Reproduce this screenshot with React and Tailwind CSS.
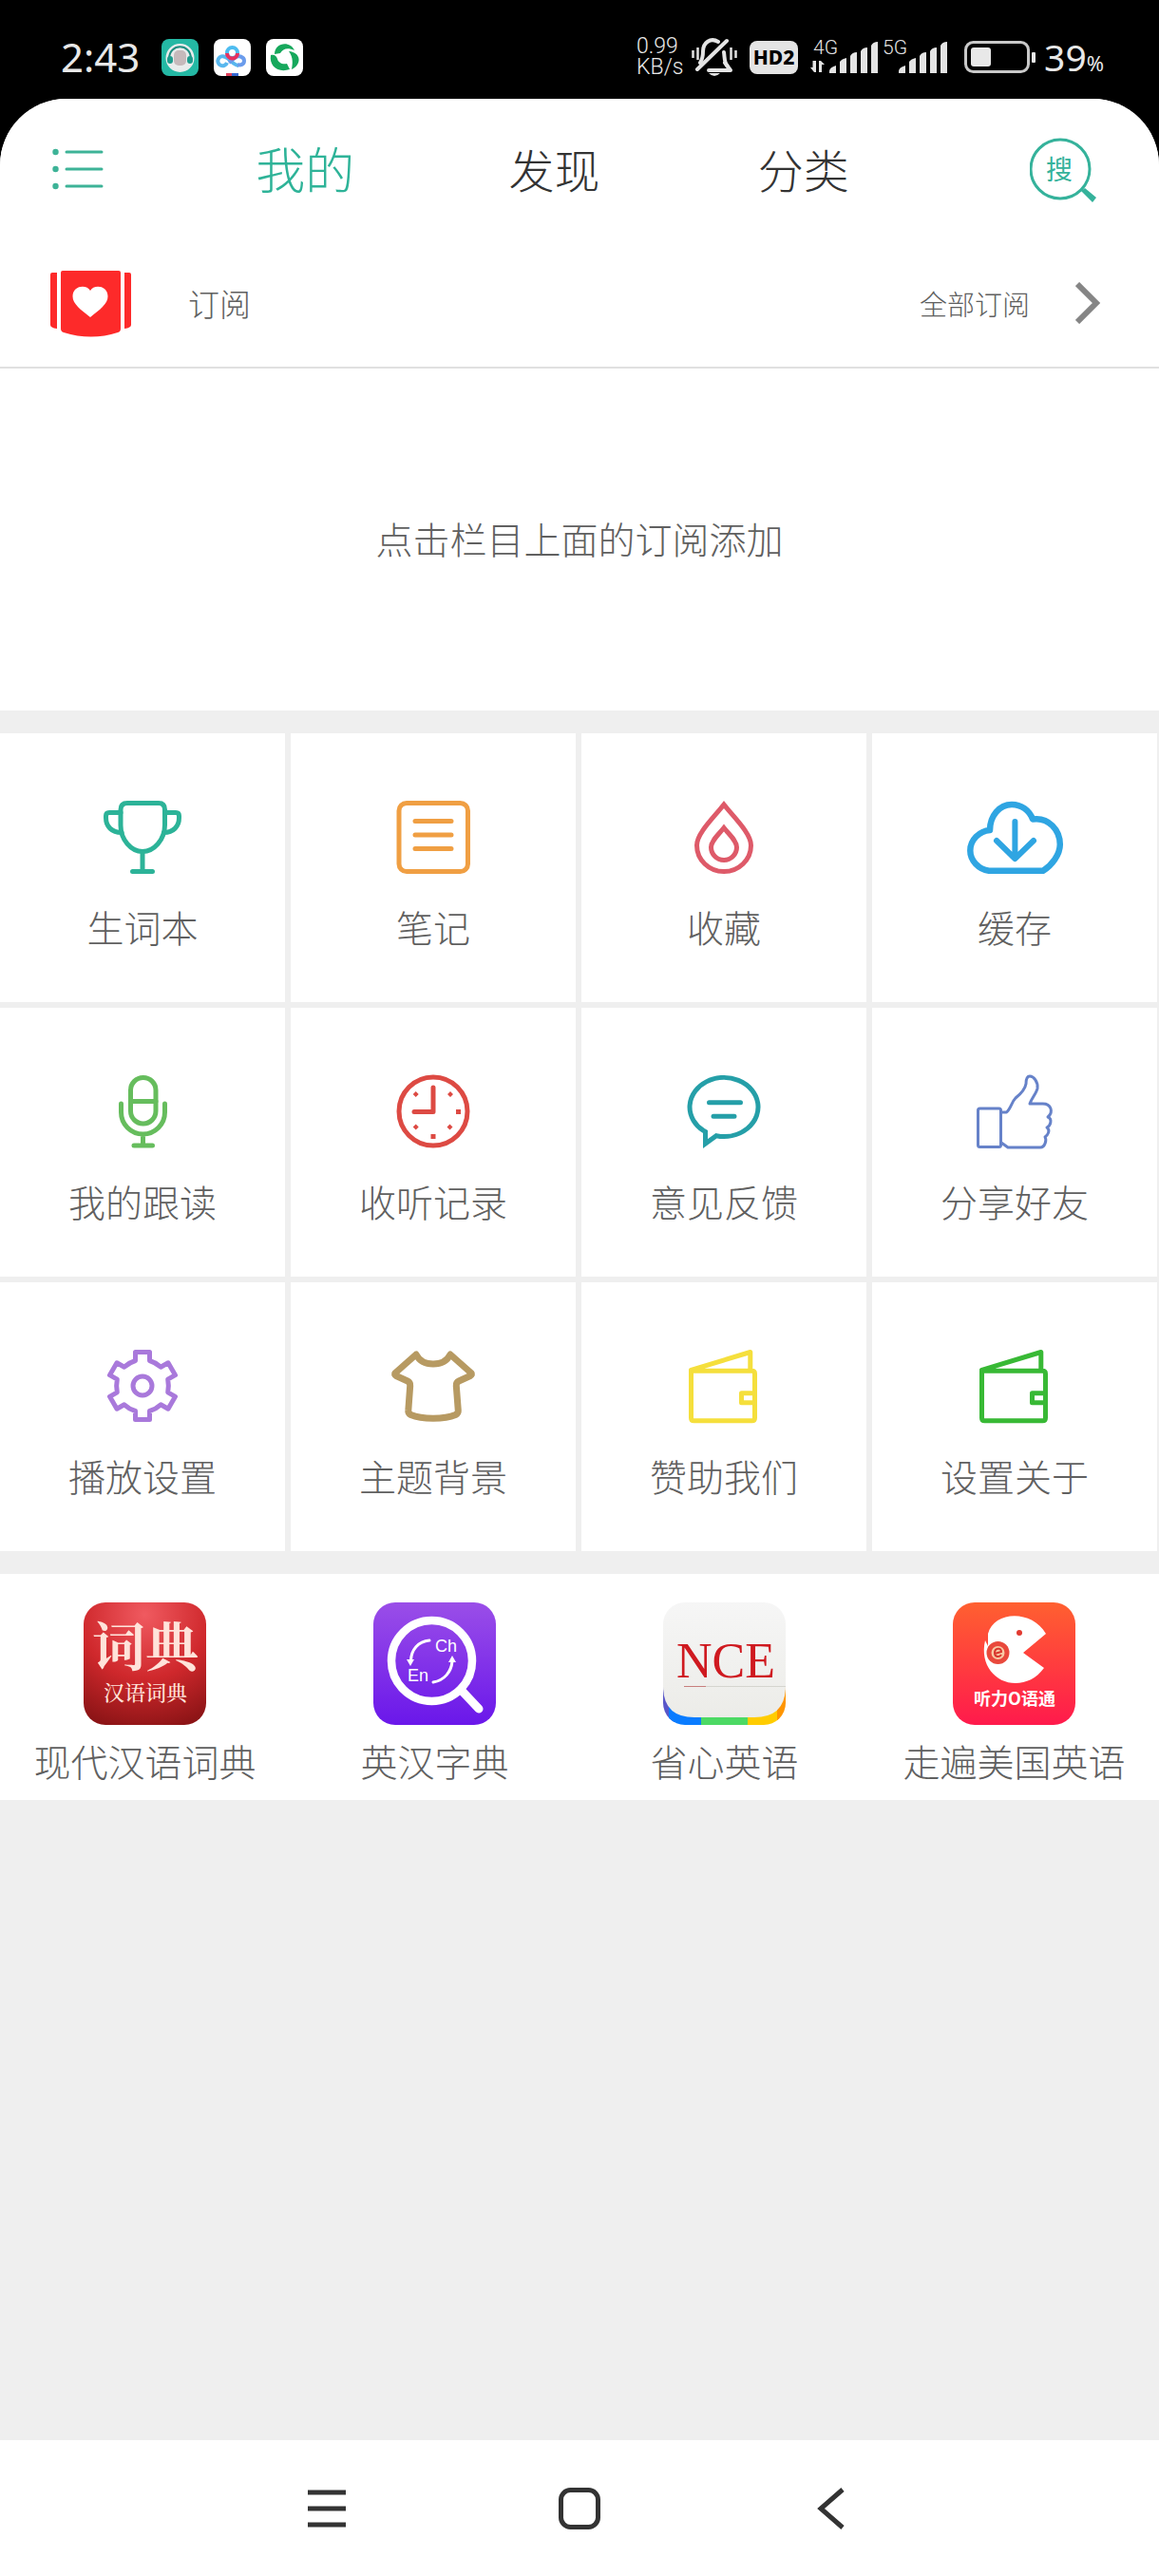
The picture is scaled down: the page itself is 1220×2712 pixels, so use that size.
import { useState } from "react";

// status bar icons
function BellOff() {
  return (
    <svg className="w-12 h-10" viewBox="0 0 48 40" fill="none" stroke="#e4e4e4">
      <path d="M38 30c-4-4-3-9-4-15M28 4C20-1 12 5 12 14c0 6-1 9-3 12" strokeWidth="4" strokeLinecap="round" />
      <path d="M18 34h23l-6-8" strokeWidth="4" strokeLinejoin="round" strokeLinecap="round" />
      <path d="M37 3L6 33" strokeWidth="4" strokeLinecap="round" />
      <path d="M18 37h12q-6 6-12 0z" fill="#e4e4e4" stroke="none" />
      <path d="M1.500 13v8M6.500 10v13M41.500 10v13M46.500 13v8" strokeWidth="2.500" />
    </svg>
  );
}

function Signal({ label, arrows }) {
  return (
    <svg className="w-[73px] h-12 shrink-0" viewBox="0 -4 73 48" fill="#e4e4e4">
      <text x="4" y="17" fontSize="21" className="font-light" fontFamily="Roboto, sans-serif">
        {label}
      </text>
      {arrows && (
        <path d="M3.500 24v7H1l4 5h2V24zM12 36v-7h-2v7zM10 24v12h3v-8h3l-4-4z" />
      )}
      <path d="M21 37v-2q0-4 7-6v8zM32 37V25q2-3 7-4v16zM43 37V19q2-4 7-4v22zM54 37V14q2-4 7-4v27zM65 37V8q2-4 7-4v33z" />
    </svg>
  );
}

function StatusBar() {
  return (
    <div className="flex items-center justify-between h-[104px] pt-4 pl-[64px] pr-[58px] text-[#e8e8e8]">
      <div className="flex items-center gap-4">
        <span className="text-[42px] leading-10 w-[90px]">2:43</span>
        <svg className="w-[39px] h-[39px]" viewBox="0 0 39 39">
          <rect width="39" height="39" rx="8" fill="#24b8a4" />
          <circle cx="19.500" cy="20" r="15" fill="#e9ecec" />
          <rect x="13" y="12" width="13" height="16" rx="5" fill="#c6b9bb" />
          <path d="M8 21C8 4 31 4 31 21" fill="none" stroke="#1d8d80" strokeWidth="2" />
          <rect x="6" y="18" width="6" height="8" rx="3" fill="#1d9c8d" />
          <rect x="27" y="18" width="6" height="8" rx="3" fill="#1d9c8d" />
        </svg>
        <svg className="w-[39px] h-[39px]" viewBox="0 0 39 39" fill="none" strokeWidth="4">
          <rect width="39" height="39" rx="8" fill="#fff" />
          <path d="M14 25a5 5 0 1 1-2-6c5 2 9 9 14 9" stroke="#58b7ee" />
          <path d="M16 25l6-5c3-3 10-2 10 3 0 4-4 5-7 4" stroke="#6b9cec" />
          <circle cx="19.500" cy="14.500" r="5.500" stroke="#4dbcf0" />
          <path d="M14 15a5.500 5.500 0 0 0 11 0" stroke="#e8315f" />
          <path d="M13 38h6" stroke="#e0405a" />
          <path d="M19 38h7" stroke="#3568d0" />
        </svg>
        <svg className="w-[39px] h-[39px]" viewBox="0 0 39 39" fill="#16a85c">
          <rect width="39" height="39" rx="8" fill="#fff" />
          <path d="M9 16C9 4 25 1 30 12c-7-3-12-2-15 3z" />
          <path d="M24 13c13 1 14 14 3 19 1-6 2-12-3-19z" />
          <path d="M5 17c4-1 6 1 7 4 1 4 5 6 10 5l3 6C13 36 3 29 5 17z" />
        </svg>
      </div>

      <div className="flex items-center">
        <div className="w-[58px] text-[23px] leading-[22px] font-light font-[Roboto,sans-serif]">
          <p>0.99</p>
          <p>KB/s</p>
        </div>
        <BellOff />
        <span className="ml-[13px] w-[51px] h-[35px] rounded-lg bg-[#e4e4e4] text-black text-[21px] leading-[35px] font-extrabold text-center">
          HD2
        </span>
        <div className="flex ml-3">
          <Signal label="4G" arrows />
          <Signal label="5G" />
        </div>
        <svg className="ml-[17px] w-[76px] h-9" viewBox="0 0 76 36">
          <rect x="1.500" y="2.500" width="66" height="31" rx="8" fill="none" stroke="#c9c9c9" strokeWidth="3" />
          <rect x="7" y="8" width="21" height="20" rx="3" fill="#e8e8e8" />
          <rect x="71" y="13" width="4" height="11" rx="1" fill="#e8e8e8" />
        </svg>
        <span className="ml-2 text-[39px] leading-10">39</span>
        <span className="text-[22px] leading-10 pt-3">%</span>
      </div>
    </div>
  );
}

// line icons of the function grid
const icons = {
  trophy: (
    <g stroke="#2cb398" strokeWidth="5">
      <path d="M39 3.500h33q6.500 0 6.500 7v16C78.500 42 67 54.500 55 54.500S32 42 32 27V10.500q0-7 7-7z" />
      <path d="M32 13.500H20q-3.500 0-3.500 3.500v2c0 9 6 15.500 16.500 15.500M78.500 13.500H90q3.500 0 3.500 3.500v2c0 9-6 15.500-16 15.500M55 55v20M44.500 75.500h21" />
    </g>
  ),
  note: (
    <g stroke="#f09f43" strokeWidth="5">
      <rect x="19" y="3.500" width="72.500" height="72" rx="8" />
      <path d="M36 22.500h38M36 37h38M36 51.500h38" />
    </g>
  ),
  drop: (
    <g stroke="#de5a69" strokeWidth="5" strokeLinejoin="miter">
      <path d="M55 5C45 18 26.500 35 26.500 48a28.500 27.500 0 0 0 57 0C83.500 35 65 18 55 5z" />
      <path d="M55 29.500C50 36 41.500 43 41.500 50a13.500 13.500 0 0 0 27 0C68.500 43 60 36 55 29.500z" />
    </g>
  ),
  cloud: (
    <g stroke="#2fa5e2" strokeWidth="6.500">
      <path d="M28 74.800C17 73 8.300 64 8.300 53.500 8.300 42 18 33 29 32 29 17 39 5 52 5c10 0 18.500 6 22 15.500C91 18 102.800 32 102.800 47c0 11-8.800 22-17.800 27.800z" />
      <path d="M55.400 23v38M36 43l19.400 19L75 43" strokeWidth="6" />
    </g>
  ),
  mic: (
    <g stroke="#66bd5d" strokeWidth="5">
      <rect x="42.500" y="3.500" width="26.500" height="48.500" rx="13.200" />
      <path d="M43 28.500h26M32.500 31v9a23 23 0 0 0 46 0v-9M55.500 63v11M46 75h19.500" />
    </g>
  ),
  clock: (
    <g stroke="#dd4a43" strokeWidth="5">
      <circle cx="55" cy="39" r="36" />
      <path d="M55 14v25.500H35" strokeWidth="5" />
      <path
        d="M36.700 18l3 3-3 3-3-3zM73 18l3 3-3 3-3-3zM72.500 52.500l3 3-3 3-3-3zM36.700 52.500l3 3-3 3-3-3zM79 37h5v5h-5zM52.500 63h5v5h-5z"
        fill="#dd4a43"
        stroke="none"
      />
    </g>
  ),
  bubble: (
    <g stroke="#259fa8" strokeWidth="5" strokeLinejoin="miter">
      <path d="M47 64.700A36 31 0 1 0 33.300 59.200L35.500 60.500V73z" />
      <path d="M39.500 29.700h33M44 44.300h22" />
    </g>
  ),
  thumb: (
    <g stroke="#6682c9" strokeWidth="3">
      <rect x="16.500" y="36" width="24" height="40.500" rx="2" />
      <path d="M41 40h5.500C51 36 52 29 56 25c5-4 10-9 11-15 0-5 1-8 4-8 4 0 9 6 8 13-1 5-6 10-8 16h12c11-1 13 9 7 14 5 2 3 9-1 11 4 3 1 8-2 10 2 3 0 11-5 11H48l-7-5" />
    </g>
  ),
  gear: (
    <g stroke="#a979db" strokeWidth="5" transform="translate(55 39)">
      <path d="M-7.500-26.500V-35.500H7.500V-26.500Q14-24.500 19.200-19.800L27-24.200 34.500-11.300 26.700-6.800Q28 0 26.700 6.800L34.500 11.300 27 24.200 19.200 19.800Q14 24.500 7.500 26.500V35.500H-7.500V26.500Q-14 24.500-19.200 19.800L-27 24.200-34.500 11.300-26.700 6.800Q-28 0-26.700-6.800L-34.500-11.300-27-24.200-19.200-19.800Q-14-24.500-7.500-26.500Z" />
      <circle r="10" />
    </g>
  ),
  shirt: (
    <g stroke="#b79a62" strokeWidth="7">
      <path d="M37 6L15 25.500q-1.500 1.500 1 3L28 34q3 1.500 2.700 5L28.800 65q-.3 3 2.700 4.500c11.500 5 35.500 5 47 0q3-1.500 2.800-4.500l-2-26q-.3-3.500 2.700-5l12-5.500q2.500-1.500 1-3L73 6c-3 6-9 10-18 10S40 12 37 6z" />
    </g>
  ),
  wallet: (
    <g strokeWidth="5">
      <path d="M20.500 23.300h64q3 0 3 3v46.500q0 3-3 3h-61q-3 0-3-3zM20.500 22.300L82.800 3.500v19.800M87 46.700H73.500v10H87" />
    </g>
  ),
};

const cells = [
  { label: "生词本", icon: icons.trophy },
  { label: "笔记", icon: icons.note },
  { label: "收藏", icon: icons.drop },
  { label: "缓存", icon: icons.cloud },
  { label: "我的跟读", icon: icons.mic },
  { label: "收听记录", icon: icons.clock },
  { label: "意见反馈", icon: icons.bubble },
  { label: "分享好友", icon: icons.thumb },
  { label: "播放设置", icon: icons.gear },
  { label: "主题背景", icon: icons.shirt },
  { label: "赞助我们", icon: icons.wallet, color: "#f5df3c" },
  { label: "设置关于", icon: icons.wallet, color: "#38b935" },
];

// app logos
function DictLogo() {
  return (
    <>
      <defs>
        <radialGradient id="dict" cx="0.5" cy="0.1" r="0.95">
          <stop offset="0" stopColor="#f05a60" />
          <stop offset="0.55" stopColor="#cf282c" />
          <stop offset="1" stopColor="#8c1416" />
        </radialGradient>
      </defs>
      <rect width="129" height="129" rx="23" fill="url(#dict)" />
      <g fill="#ffe3da" textAnchor="middle" fontFamily="Noto Serif CJK SC, Noto Sans CJK SC, serif">
        <text x="65" y="67" fontSize="56" fontWeight="700">词典</text>
        <text x="65" y="103" fontSize="22" fontWeight="500">汉语词典</text>
      </g>
    </>
  );
}

function ChEnLogo() {
  return (
    <>
      <defs>
        <linearGradient id="chen" x1="0" y1="0" x2="0" y2="1">
          <stop offset="0" stopColor="#9a4ee8" />
          <stop offset="1" stopColor="#6a17ea" />
        </linearGradient>
      </defs>
      <rect width="129" height="129" rx="23" fill="url(#chen)" />
      <g fill="none" stroke="#fff" strokeLinecap="round">
        <circle cx="61.500" cy="61.500" r="42.500" strokeWidth="8.500" />
        <path d="M94 94l17 18" strokeWidth="9" />
        <path d="M59 40C47 41 40 50 39.500 61M63 84c12-2 19-11 20-22" strokeWidth="3" />
      </g>
      <path d="M35 60h8l-4 7zM79 63h8l-4-7z" fill="#fff" />
      <g fill="#fff" fontSize="18" fontWeight="400" fontFamily="Liberation Sans, sans-serif">
        <text x="65" y="52">Ch</text>
        <text x="36" y="83">En</text>
      </g>
    </>
  );
}

function NceLogo() {
  return (
    <>
      <defs>
        <clipPath id="nceClip">
          <rect width="129" height="129" rx="23" />
        </clipPath>
        <linearGradient id="nce" x1="0" y1="0" x2="0" y2="1">
          <stop offset="0" stopColor="#f6f6f6" />
          <stop offset="1" stopColor="#ecece8" />
        </linearGradient>
      </defs>
      <g clipPath="url(#nceClip)">
        <path d="M0 80h12v49H0z" fill="#5856c8" />
        <path d="M6 110h34v19H6z" fill="#0a7cff" />
        <path d="M40 115h49v14H40z" fill="#4cd964" />
        <path d="M89 110h32v19H89z" fill="#ffcc00" />
        <path d="M120 80h9v49h-9z" fill="#ff9500" />
        <path d="M0 0h129v88q0 33-33 33H33Q0 121 0 88z" fill="url(#nce)" />
      </g>
      <path d="M22 88.500h107" stroke="#d5d5cf" />
      <path d="M22 88.500h23" stroke="#c77f7d" />
      <text x="66" y="79" fontSize="52" textAnchor="middle" fill="#cf1a20" fontFamily="Liberation Serif, serif">
        NCE
      </text>
    </>
  );
}

function OralLogo() {
  return (
    <>
      <defs>
        <linearGradient id="oral" x1="0" y1="0" x2="0" y2="1">
          <stop offset="0" stopColor="#ff6030" />
          <stop offset="1" stopColor="#ff1a4c" />
        </linearGradient>
      </defs>
      <rect width="129" height="129" rx="23" fill="url(#oral)" />
      <path d="M98 33L74 53l22 16C88 80 77 85 66 85 45 85 28 66 34 40l3 6V33C43 9 83 7 98 33z" fill="#fff" />
      <circle cx="70" cy="32" r="3" fill="#e23a30" />
      <circle cx="47.500" cy="53" r="12" fill="#e9493c" />
      <circle cx="47.500" cy="53" r="7" fill="#f8c9a4" />
      <path d="M44 54l7-2c0-5-7-4-7 1s5 5 7 2" fill="none" stroke="#d8352c" strokeWidth="2" />
      <text x="65" y="108" fontSize="18" fontWeight="700" textAnchor="middle" fill="#fff" fontFamily="Noto Sans CJK SC, sans-serif">
        听力O语通
      </text>
    </>
  );
}

const apps = [
  { label: "现代汉语词典", Logo: DictLogo },
  { label: "英汉字典", Logo: ChEnLogo },
  { label: "省心英语", Logo: NceLogo },
  { label: "走遍美国英语", Logo: OralLogo },
];

const tabs = ["我的", "发现", "分类"];

export default function App() {
  const [active, setActive] = useState("我的");

  return (
    <div className="min-h-screen flex flex-col bg-black font-['Noto_Sans','Noto_Sans_CJK_SC',sans-serif]">
      <StatusBar />

      <div className="flex-1 flex flex-col bg-[#efefef] rounded-t-[70px] overflow-hidden font-['Noto_Sans_CJK_SC',sans-serif] font-light text-[#606060]">
        {/* Header */}
        <header className="flex items-center h-[148px] pl-[55px] pr-[64px] bg-white">
          <button aria-label="菜单">
            <svg className="w-[54px] h-11" viewBox="0 0 54 44" fill="none" stroke="#3db397" strokeWidth="3" strokeLinecap="round">
              <path d="M15 4h37M15 22h37M15 40h37" />
              <g fill="#3db397" stroke="none">
                <circle cx="3.500" cy="4" r="3.200" />
                <circle cx="3.500" cy="22" r="3.200" />
                <circle cx="3.500" cy="40" r="3.200" />
              </g>
            </svg>
          </button>
          <nav className="flex-1 grid grid-cols-3 ml-[81px] mr-[107px] pb-[2px]">
            {tabs.map((tab) => (
              <button
                key={tab}
                onClick={() => setActive(tab)}
                className={
                  tab === active
                    ? "text-[52px] leading-[60px] text-[#2eb398]"
                    : "text-[48px] leading-[60px] text-[#333333]"
                }
              >
                {tab}
              </button>
            ))}
          </nav>
          <button aria-label="搜索">
            <svg className="w-[72px] h-[72px]" viewBox="0 -2 72 72">
              <circle cx="32" cy="34" r="31" fill="none" stroke="#35b29b" strokeWidth="3" />
              <path d="M54 57l4-3 12 10-4 5z" fill="#35b29b" />
              <text x="31" y="45" fontSize="28" fontWeight="400" textAnchor="middle" fill="#35b29b">
                搜
              </text>
            </svg>
          </button>
        </header>

        {/* Subscriptions */}
        <div className="flex items-center h-[136px] pl-[53px] pr-[61px] bg-white border-b-2 border-[#e0e0e0]">
          <svg className="w-[85px] h-[72px]" viewBox="0 -1 85 72" fill="#fd2a2a">
            <path d="M2 3h5v59q-7-1-7-4V5q0-2 2-2zM83 3h-5v59q7-1 7-4V5q0-2-2-2z" />
            <path d="M13 1h59q2 0 2 2v59q0 3-3 4-28 9-57 0-3-1-3-4V3q0-2 2-2z" />
            <path d="M42 50C32 42 23.500 36 23.500 28c0-12 15-13 18.500-6 3.500-7 18.500-6 18.500 6 0 8-8.500 14-18.500 22z" fill="#fff" />
          </svg>
          <h2 className="ml-[60px] text-[33px] leading-10">订阅</h2>
          <button className="ml-auto flex items-center gap-[48px] text-[29px] leading-10">
            全部订阅
            <svg className="w-[27px] h-11" viewBox="0 0 27 44" fill="none" stroke="#858585" strokeWidth="6">
              <path d="M2 2l20 20L2 42" />
            </svg>
          </button>
        </div>
        <p className="pt-[158px] pb-[162px] bg-white text-[39px] leading-10 text-center">
          点击栏目上面的订阅添加
        </p>

        {/* Function grid */}
        <div className="grid grid-cols-4 gap-[6px] my-6 pr-[2px]">
          {cells.map(({ label, icon, color }) => (
            <button key={label} className="flex flex-col items-center pt-[70px] pb-[60px] bg-white">
              <svg
                className="w-[110px] h-20"
                viewBox="0 0 110 80"
                fill="none"
                stroke={color}
                strokeLinecap="round"
                strokeLinejoin="round"
              >
                {icon}
              </svg>
              <span className="mt-[33px] text-[39px] leading-10">{label}</span>
            </button>
          ))}
        </div>

        {/* Recommended apps */}
        <div className="grid grid-cols-4 bg-white">
          {apps.map(({ label, Logo }) => (
            <a key={label} href="#" className="flex flex-col items-center pt-[30px] pb-[22px]">
              <svg className="w-[129px] h-[129px]" viewBox="0 0 129 129">
                <Logo />
              </svg>
              <span className="mt-[17px] text-[39px] leading-10 whitespace-nowrap">{label}</span>
            </a>
          ))}
        </div>

        {/* System navigation */}
        <div className="mt-auto flex items-center justify-center gap-[222px] h-[143px] bg-white">
          <button aria-label="最近任务">
            <svg className="w-11 h-11" viewBox="0 0 44 44" stroke="#333" strokeWidth="5">
              <path d="M2 5h40M2 22h40M2 39h40" />
            </svg>
          </button>
          <button aria-label="主页">
            <svg className="w-11 h-11" viewBox="0 0 44 44" fill="none" stroke="#333" strokeWidth="5">
              <rect x="2.500" y="2.500" width="39" height="39" rx="10" />
            </svg>
          </button>
          <button aria-label="返回">
            <svg className="w-11 h-11" viewBox="0 0 44 44" fill="none" stroke="#333" strokeWidth="5">
              <path d="M33 2L10 22l23 20" />
            </svg>
          </button>
        </div>
      </div>
    </div>
  );
}
